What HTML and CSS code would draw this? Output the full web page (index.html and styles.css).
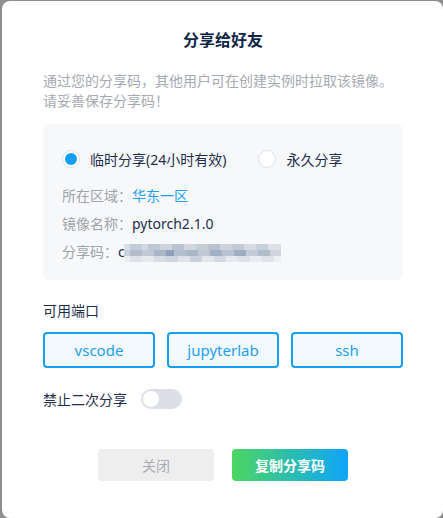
FILE: index.html
```html
<!DOCTYPE html>
<html lang="zh-CN">
<head>
<meta charset="utf-8">
<title>分享给好友</title>
<link rel="stylesheet" href="styles.css">
</head>
<body>
<div class="dialog">
  <h1 class="title">分享给好友</h1>
  <p class="desc">通过您的分享码，其他用户可在创建实例时拉取该镜像。<br>请妥善保存分享码！</p>
  <div class="panel">
    <div class="radios">
      <label class="radio checked"><span class="dot"></span><span class="rlabel">临时分享(24小时有效)</span></label>
      <label class="radio"><span class="dot"></span><span class="rlabel">永久分享</span></label>
    </div>
    <div class="rows">
      <div class="row"><span class="key">所在区域：</span><span class="val link">华东一区</span></div>
      <div class="row"><span class="key">镜像名称：</span><span class="val">pytorch2.1.0</span></div>
      <div class="row"><span class="key">分享码：</span><span class="val">c</span><span class="blur"><span class="br r1"></span><span class="br r2"></span><span class="br r3"></span></span></div>
    </div>
  </div>
  <div class="section">可用端口</div>
  <div class="ports">
    <button class="port">vscode</button>
    <button class="port">jupyterlab</button>
    <button class="port">ssh</button>
  </div>
  <div class="toggle-row">
    <span class="tlabel">禁止二次分享</span>
    <span class="switch"><span class="knob"></span></span>
  </div>
  <div class="footer">
    <button class="btn close">关闭</button>
    <button class="btn copy">复制分享码</button>
  </div>
</div>
</body>
</html>
```
FILE: styles.css
```css
html, body {
  margin: 0;
  padding: 0;
}
body {
  width: 443px;
  height: 518px;
  background: #8e8e8e;
  overflow: hidden;
  font-family: "Noto Sans", "Noto Sans CJK SC", sans-serif;
}
.dialog {
  box-sizing: border-box;
  margin: 1px 0 0 2px;
  width: 441px;
  height: 517px;
  background: #fff;
  border-radius: 8px;
  padding: 27px 40px 0 41px;
}
.title {
  margin: 0;
  font-size: 16px;
  line-height: 24px;
  font-weight: 700;
  text-align: center;
  color: #0f2747;
}
.desc {
  margin: 19px 0 0;
  font-size: 14px;
  line-height: 20px;
  color: #a5a9b2;
}
.panel {
  margin-top: 13px;
  height: 156px;
  box-sizing: border-box;
  background: #f6f8f9;
  border-radius: 6px;
  padding: 24px 20px 0 19px;
}
.radios {
  display: flex;
  align-items: center;
  height: 22px;
  gap: 32px;
}
.radio {
  display: flex;
  align-items: center;
  gap: 10px;
  font-size: 14px;
  color: #1f2d4d;
}
.dot {
  box-sizing: border-box;
  width: 18px;
  height: 18px;
  border-radius: 50%;
  border: 1px solid #dde2e9;
  background: #fff;
  display: flex;
  align-items: center;
  justify-content: center;
}
.radio.checked .dot::after {
  content: "";
  width: 12px;
  height: 12px;
  border-radius: 50%;
  background: #139ef7;
}
.rows {
  margin-top: 11px;
}
.row {
  display: flex;
  align-items: center;
  height: 28px;
  font-size: 14px;
}
.key {
  color: #9ea3ab;
}
.val {
  color: #1f2d4d;
}
.link {
  color: #1f9ff0;
}
.blur {
  display: flex;
  flex-direction: column;
  width: 157px;
  height: 18px;
  margin-left: -1px;
  margin-top: 4px;
}
.br {
  flex: 1;
}
.r1 {
  background: linear-gradient(90deg, #d9dee6 0 6px, #c3ccd8 6px 18px, #d3d9e2 18px 24px, #bfc8d5 24px 36px, #cdd4de 36px 48px, #b9c3d1 48px 60px, #d0d6df 60px 72px, #c5cdd9 72px 84px, #b7c1cf 84px 96px, #cdd3dd 96px 108px, #c1cad6 108px 120px, #d6dbe3 120px 132px, #c7cfda 132px 144px, #dde1e7 144px 157px);
}
.r2 {
  background: linear-gradient(90deg, #c8d0db 0 6px, #b1bdcc 6px 18px, #c0c9d5 18px 30px, #a9b6c8 30px 42px, #8e9fb7 42px 50px, #b4bfce 50px 62px, #aab7c8 62px 74px, #c0c9d5 74px 86px, #a3b1c4 86px 98px, #b8c2d0 98px 110px, #9fadc1 110px 122px, #c4ccd8 122px 134px, #b2bdcc 134px 146px, #cfd5df 146px 157px);
}
.r3 {
  background: linear-gradient(90deg, #eceff3 0 6px, #dde2e9 6px 18px, #e6e9ee 18px 30px, #d6dce4 30px 42px, #cdd4de 42px 54px, #dfe3e9 54px 66px, #c9d1dc 66px 78px, #e2e6eb 78px 90px, #d3d9e2 90px 102px, #e5e8ed 102px 114px, #dce1e8 114px 126px, #e8ebef 126px 138px, #dfe3e9 138px 150px, #eef0f3 150px 157px);
}
.section {
  margin-top: 21px;
  font-size: 14px;
  line-height: 20px;
  color: #1f2d4d;
}
.ports {
  margin-top: 11px;
  display: grid;
  grid-template-columns: repeat(3, 1fr);
  gap: 12px;
}
.port {
  box-sizing: border-box;
  height: 36px;
  border: 2px solid #14a0f5;
  border-radius: 4px;
  background: #f2f9ff;
  color: #1f9ff0;
  font-family: "Noto Sans", "Noto Sans CJK SC", sans-serif;
  font-size: 15px;
  padding: 0;
}
.toggle-row {
  margin-top: 21px;
  display: flex;
  align-items: center;
  height: 20px;
  gap: 14px;
}
.tlabel {
  font-size: 14px;
  color: #1f2d4d;
}
.switch {
  box-sizing: border-box;
  width: 41px;
  height: 20px;
  border-radius: 10px;
  background: #dcdfe7;
  padding: 2px;
  display: flex;
}
.knob {
  width: 16px;
  height: 16px;
  border-radius: 50%;
  background: #fff;
}
.footer {
  margin-top: 40px;
  display: flex;
  justify-content: center;
  gap: 18px;
}
.btn {
  width: 116px;
  height: 32px;
  border: 0;
  border-radius: 4px;
  font-family: "Noto Sans CJK SC", sans-serif;
  font-size: 14px;
  padding: 0;
}
.close {
  background: #eeeeee;
  color: #a9acb3;
}
.copy {
  background: linear-gradient(90deg, #4cd662 0%, #0ea4fa 100%);
  color: #fff;
  font-weight: 700;
}
```
